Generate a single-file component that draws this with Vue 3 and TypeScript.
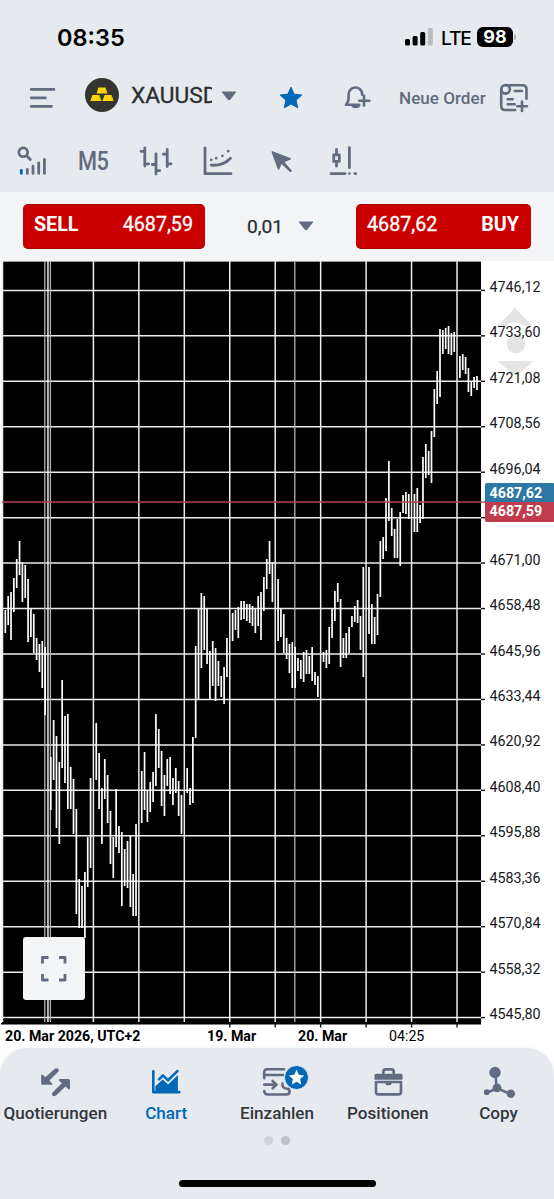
<script setup lang="ts">
type Bar = [index: number, high: number, low: number]

const left = 2.5
const step = 2.841
const top = 261
const gridTop = 290.4
const gridGap = 45.45

const bars: Bar[] = [
  [1, 610, 633], [2, 596, 625], [3, 592, 640], [4, 578, 612], [5, 559, 588], [6, 541, 575],
  [7, 562, 602], [8, 565, 598], [9, 579, 642], [10, 609, 637], [11, 614, 653], [12, 638, 660],
  [13, 644, 672], [14, 641, 688], [15, 647, 715], [17, 757, 810], [18, 720, 780], [19, 736, 828],
  [20, 762, 844], [21, 680, 768], [22, 716, 783], [23, 714, 809], [24, 767, 809], [25, 779, 834],
  [26, 809, 914], [27, 879, 928], [28, 886, 928], [29, 872, 938], [30, 837, 887], [31, 778, 868],
  [33, 723, 780], [34, 753, 809], [35, 788, 844], [36, 759, 799], [37, 775, 823], [38, 811, 864],
  [39, 837, 878], [40, 789, 847], [41, 826, 853], [42, 832, 906], [43, 849, 886], [44, 841, 888],
  [45, 835, 907], [46, 874, 916], [47, 824, 916], [49, 771, 823], [50, 752, 810], [51, 790, 822],
  [52, 782, 812], [53, 772, 802], [54, 714, 786], [55, 729, 768], [56, 751, 806], [57, 775, 816],
  [58, 759, 786], [59, 757, 794], [60, 778, 805], [61, 768, 793], [62, 781, 816], [63, 795, 834],
  [65, 768, 793], [66, 788, 805], [67, 737, 803], [68, 646, 738], [69, 609, 699], [70, 593, 668],
  [71, 596, 650], [72, 609, 664], [73, 651, 700], [74, 641, 686], [75, 648, 701], [76, 661, 686],
  [77, 676, 697], [78, 667, 704], [79, 638, 677], [81, 613, 641], [82, 610, 630], [83, 607, 638],
  [84, 601, 620], [85, 601, 619], [86, 604, 621], [87, 604, 623], [88, 606, 626], [89, 609, 633],
  [90, 596, 626], [91, 592, 640], [92, 577, 611], [93, 559, 589], [94, 541, 574], [95, 562, 602],
  [97, 579, 641], [98, 609, 637], [99, 614, 653], [100, 638, 659], [101, 644, 673], [102, 642, 688],
  [103, 647, 688], [104, 658, 671], [105, 660, 679], [106, 652, 682], [107, 650, 674], [108, 656, 674],
  [109, 647, 681], [110, 672, 685], [111, 676, 697], [113, 652, 662], [114, 650, 668], [115, 627, 664],
  [116, 609, 638], [117, 591, 621], [118, 583, 602], [119, 599, 667], [120, 638, 658], [121, 633, 658],
  [122, 627, 653], [123, 616, 627], [124, 606, 622], [125, 600, 623], [126, 616, 650], [127, 567, 677],
  [129, 567, 634], [130, 604, 644], [131, 617, 644], [132, 594, 635], [133, 541, 597], [134, 537, 559],
  [135, 498, 551], [136, 461, 521], [137, 508, 536], [138, 529, 558], [139, 519, 558], [140, 512, 566],
  [141, 495, 513], [142, 492, 514], [143, 494, 519], [145, 494, 532], [146, 488, 532], [147, 505, 523],
  [148, 457, 519], [149, 444, 478], [150, 451, 475], [151, 431, 483], [152, 389, 437], [153, 371, 404],
  [154, 329, 397], [155, 330, 354], [156, 328, 349], [157, 326, 354], [158, 333, 355], [159, 332, 352],
  [161, 356, 378], [162, 354, 370], [163, 357, 374], [164, 368, 392], [165, 382, 396], [166, 377, 388],
  [167, 376, 390],
]

const rows = Array.from({ length: 17 }, (_, k) => gridTop + gridGap * k - top)
const columns = Array.from({ length: 11 }, (_, k) => left + gridGap * k)
const sessionLines = [44.8, 50.4, 294.8]
const barX = (i: number) => left + step * i
const prices = [
  '4746,12', '4733,60', '4721,08', '4708,56', '4696,04', '', '4671,00', '4658,48', '4645,96',
  '4633,44', '4620,92', '4608,40', '4595,88', '4583,36', '4570,84', '4558,32', '4545,80',
]
const starPath = 'M12 1.2l3.2 7 7.6.8-5.7 5.2 1.6 7.6-6.7-3.8-6.7 3.8 1.6-7.6L1.2 9l7.6-.8z'
</script>

<template>
  <main class="screen">
    <header class="head">
      <div class="status">
        <span class="clock">08:35</span>
        <svg class="signal" width="28" height="18" viewBox="0 0 28 18">
          <rect x="0" y="11" width="5" height="6.5" rx="1.5" />
          <rect x="7.6" y="8" width="5" height="9.5" rx="1.5" />
          <rect x="15.2" y="4" width="5" height="13.5" rx="1.5" />
          <rect x="22.8" y="0" width="5" height="17.5" rx="1.5" fill="#b9bcc1" />
        </svg>
        <span class="lte">LTE</span>
        <span class="battery">98</span><i class="nub"></i>
      </div>

      <div class="title-row">
        <svg class="menu" width="26" height="22" viewBox="0 0 26 22">
          <path class="line" d="M2.2 2.4H25M2.2 10.9H16.5M2.2 19.4H22.5" />
        </svg>
        <svg class="gold" width="34" height="34" viewBox="0 0 34 34">
          <circle cx="17" cy="17" r="17" fill="#35352f" />
          <path fill="#ffd60a" d="M13.4 9.6h7l2.1 6H11.6zM7.4 16.9h6.8l2.5 6.2H5.3zM19.6 16.9h6.8l2.3 6.2H17.4z" />
          <path fill="#dcb400" d="M13.2 16.9h1l2.5 6.2h-1.3zM25.4 16.9h1l2.3 6.2h-1.3zM19.5 9.6h.9l2.1 6h-1.3z" />
        </svg>
        <span class="symbol">XAUUSD</span>
        <svg class="caret" width="16" height="10" viewBox="0 0 16 10"><path d="M1.4 1h13.2L9 8q-1 1-2 0z" /></svg>
        <svg class="favourite" width="24" height="24" viewBox="0 0 24 24"><path :d="starPath" /></svg>
        <svg class="bell" width="28" height="24" viewBox="0 0 28 24">
          <path class="line" d="M15.2 18.8H2c1.6-1.8 2.6-3.2 2.6-6V8.5a6.8 6.8 0 0 1 13.6-.5v.7M20 9.8v9.8M15.2 14.7h10.2" />
          <path fill="#626b80" d="M7 19.5h9.5a5 4 0 0 1-9.5 0z" />
        </svg>
        <span class="neue">Neue Order</span>
        <svg class="order" width="30" height="30" viewBox="0 0 30 30">
          <path class="line" d="M6 2.2h17.5q4 0 4 4v9.5M2.2 6v17q0 4 4 4h10M8.7 16.2h5M8.7 21.2h7M15.8 8h7M23 18.5v9.5M18.2 23.2h9.8" />
          <circle class="line" cx="6.6" cy="6.3" r="4.3" />
        </svg>
      </div>

      <div class="tools">
        <svg class="tool t1" width="30" height="30" viewBox="0 0 30 30">
          <circle class="line" cx="6.2" cy="6.3" r="4.4" /><path class="line" d="M9.7 9.7l3.6 3.8" />
          <path class="line" d="M10.3 23.4v4M16 20.2v7.2M21.7 16.8v10.6M27.4 13.3v14.1" />
          <path class="line blue" d="M4.3 24.3v3.1" />
        </svg>
        <span class="period">M5</span>
        <svg class="tool t2" width="32" height="30" viewBox="0 0 32 30">
          <path class="line" d="M4.8 1.8V20M1 5.3h3.8M4.8 17.8h3.8M16 7.8V28M12.2 18.5H16M16 24.6h3.8M27.2 3.5v17M23.4 8.2h3.8M27.2 17.8H31" />
        </svg>
        <svg class="tool t3" width="30" height="30" viewBox="0 0 30 30">
          <path class="line" d="M2 2v25.7h26M8.2 19.2q12 .8 19.3-7" />
          <path class="line dots" d="M8.2 13.8h.01M13.2 12.2h.01M19.4 9.8h.01M25.2 5.2h.01" />
        </svg>
        <svg class="tool t4" width="24" height="24" viewBox="0 0 24 24">
          <path fill="#626b80" d="M1.6 1.2Q.2.8.7 2.5L6.7 19q.8 1.6 1.6.2l2.2-5.1 8.2 7.7q1.8.9 2.2-1L13.4 12l6-2.3q1.4-.9-.2-1.6z" />
        </svg>
        <svg class="tool t5" width="30" height="30" viewBox="0 0 30 30">
          <path class="line" d="M7.5 3.3V8M7.5 16v4.2M4.7 8.8h5.6v6.6H4.7zM20.4 1.7v20M2 27.6h14" />
          <path class="line dots" d="M20.4 27.6h.01M25.8 27.6h1" />
        </svg>
      </div>
    </header>

    <section class="trade">
      <button class="deal sell"><b>SELL</b><span>4687,59</span></button>
      <div class="volume">
        <span>0,01</span>
        <svg class="caret" width="16" height="10" viewBox="0 0 16 10"><path d="M1.4 1h13.2L9 8q-1 1-2 0z" /></svg>
      </div>
      <button class="deal buy"><span>4687,62</span><b>BUY</b></button>
    </section>

    <section class="chart">
      <svg class="plot" width="485" height="768" viewBox="0 0 485 768">
        <rect x="2" y="0" width="479" height="763" fill="#000" />
        <path d="M2 .5H481" stroke="#999" />
        <g stroke="#ececec" stroke-width="1.5">
          <line v-for="y in rows" :key="y" x1="2" x2="481" :y1="y" :y2="y" />
          <line v-for="x in columns" :key="x" :x1="x" :x2="x" y1="0" y2="761" />
        </g>
        <line v-for="x in sessionLines" :key="x" :x1="x" :x2="x" y1="0" y2="761" stroke="#b4b4b4" stroke-width="1.3" />
        <line
          v-for="[i, high, low] in bars" :key="i" class="bar"
          :x1="barX(i)" :x2="barX(i)" :y1="high - top" :y2="low - top"
        />
        <path d="M2 241H485" stroke="#b5474d" stroke-width="1.7" />
        <path d="M1 762.7H481" stroke="#000" stroke-width="1.4" />
        <line v-for="y in rows" :key="'t' + y" x1="481" x2="485" :y1="y" :y2="y" stroke="#111" stroke-width="1.4" />
        <line v-for="x in columns.slice(5)" :key="'b' + x" :x1="x" :x2="x" y1="762" y2="766.5" stroke="#111" stroke-width="1.4" />
      </svg>
      <div class="axis">
        <svg class="shift" width="38" height="68" viewBox="0 0 38 68">
          <path fill="#e4e4e4" d="M19 0l18 18.5H28a11.5 11.5 0 0 0-18 0H1zM1.5 53H38L24.5 64q-5 4-10 0z" />
          <circle cx="20" cy="36" r="9.3" fill="#e4e4e4" />
        </svg>
        <span v-for="(price, i) in prices" :key="i" class="price">{{ price }}</span>
        <div class="quotes"><b class="ask">4687,62</b><b class="bid">4687,59</b></div>
      </div>
      <button class="expand">
        <svg width="28" height="28" viewBox="0 0 28 28">
          <path class="frame" d="M2.5 8.5v-6h6M19 2.5h6v6M25 19v6h-6M8.5 25h-6v-6" />
        </svg>
      </button>
    </section>

    <div class="dates">
      <b class="d1">20. Mar 2026, UTC+2</b><b class="d2">19. Mar</b><b class="d3">20. Mar</b><span class="d4">04:25</span>
    </div>

    <footer class="foot">
      <nav class="tabs">
        <a class="tab">
          <svg width="32" height="32" viewBox="0 0 32 32">
            <path fill="#626b80" d="M2.2 9.6q0-2 1.8-.6l2.4 2.2 9.4-8.4q2.8-1.6 3.9.6.6 1.5-.7 2.6l-8.6 8.5 2.8 2.9q1 1.3-.8 1.4H3.7q-1.5 0-1.5-1.5z" />
            <path fill="#626b80" d="M31 22.3q0 2-1.8.6L26.6 20.5 17 29.5q-2.6 1.5-3.9-.6-.6-1.5.7-2.7l9-8.9-2.8-2.7q-1-1.5.9-1.6h8.7q1.4 0 1.4 1.5z" />
          </svg>
          <span>Quotierungen</span>
        </a>
        <a class="tab active">
          <svg width="32" height="32" viewBox="0 0 32 32">
            <path class="line blue" d="M3.3 5.3v20.8h26M9 13.3l4-4 5 5 9.4-9.2" />
            <path fill="#0068b7" d="M5.4 25v-4.8l7.3-6.7 5.4 5 9.8-9.4V25z" />
          </svg>
          <span>Chart</span>
        </a>
        <a class="tab">
          <svg width="32" height="32" viewBox="0 0 32 32">
            <path class="line" d="M23 3.2H6.2Q3.2 3.2 3.2 6.5v5.7M3.2 9H22M3.2 18.6h12M11.6 15l4 3.6-4 3.7M3.2 25q.3 3.5 3.5 3.5h18.5q3.3 0 3.3-3t-3.3-3q-4.2-.6-3.7-5" />
          </svg>
          <span class="badge"><svg width="17" height="17" viewBox="0 0 24 24"><path :d="starPath" fill="#fff" /></svg></span>
          <span>Einzahlen</span>
        </a>
        <a class="tab">
          <svg width="32" height="32" viewBox="0 0 32 32">
            <path class="line" d="M11.3 8V5.7q0-2.3 2.3-2.3h5.8q2.3 0 2.3 2.3V8M4 16v10q0 2.4 2.4 2.4h20.2q2.4 0 2.4-2.4V16z" />
            <path fill="#626b80" d="M4.2 7.8h24.6q1.7 0 1.7 1.7v4.2H2.5V9.5q0-1.7 1.7-1.7zM13.5 16h6v1.6q0 1.7-1.7 1.7h-2.6q-1.7 0-1.7-1.7z" />
          </svg>
          <span>Positionen</span>
        </a>
        <a class="tab">
          <svg width="32" height="32" viewBox="0 0 32 32">
            <path class="line" d="M12.4 7l1.2 15M3.5 27l10.6-4.8 13.5 6" />
            <g fill="#626b80"><circle cx="12" cy="6.5" r="5.7" /><circle cx="14" cy="21.9" r="4.4" /><circle cx="3.7" cy="26.2" r="2.9" /><circle cx="27.8" cy="27.7" r="4.2" /></g>
          </svg>
          <span>Copy</span>
        </a>
      </nav>
      <div class="pages"><i></i><i class="on"></i></div>
      <div class="home"></div>
    </footer>
  </main>
</template>

<style>
body { margin: 0; background: #fff; }
</style>

<style scoped>
* { box-sizing: border-box; }
.screen { width: 554px; height: 1199px; overflow: hidden; display: flex; flex-direction: column; background: #fff; font-family: Roboto, "Liberation Sans", sans-serif; color: #1b1e22; }
svg { display: block; flex: none; overflow: visible; }
button { border: 0; font: inherit; }
.line { fill: none; stroke: #626b80; stroke-width: 2.6; stroke-linecap: round; stroke-linejoin: round; }
.tools .line { stroke-width: 2.8; }
.blue { stroke: #0068b7; }
.caret { fill: #626b80; stroke: #626b80; stroke-width: 1.2; stroke-linejoin: round; }
.head { height: 192px; flex: none; background: #e6eaef; }
.status { height: 74px; display: flex; align-items: center; padding-left: 57px; color: #000; font-family: Inter, sans-serif; }
.clock { width: 348px; font-size: 23.5px; font-weight: 600; line-height: 30px; padding-top: 1px; }
.lte { margin-left: 8px; width: 36px; font-size: 19.2px; font-weight: 500; letter-spacing: -1.1px; padding-top: 1px; }
.battery { width: 36px; height: 20px; background: #000; color: #fff; border-radius: 6px; text-align: center; font-size: 18px; line-height: 20px; font-weight: 700; }
.nub { width: 2px; height: 6px; margin-left: 1px; background: #aeb1b6; border-radius: 0 2px 2px 0; }
.title-row { height: 48px; display: flex; align-items: center; padding-left: 29px; }
.gold { margin: -6px 0 0 30px; }
.symbol { margin: -5px 0 0 12px; width: 81px; overflow: hidden; font-size: 22.7px; line-height: 30px; color: #2c2e31; -webkit-text-stroke: .3px #2c2e31; }
.title-row .caret { margin: -5px 0 0 9px; }
.favourite { margin-left: 42px; fill: #0068b7; stroke: #0068b7; stroke-width: 1; stroke-linejoin: round; }
.bell { margin-left: 41px; }
.neue { margin-left: 27px; width: 100px; font-size: 17.1px; font-weight: 500; color: #626b80; white-space: nowrap; }
.tools { height: 70px; display: flex; align-items: flex-start; padding: 24px 0 0 17px; }
.period { margin: 1px 0 0 31px; width: 32px; font-size: 25px; line-height: 30px; font-weight: 500; letter-spacing: -.5px; color: #626b80; transform: scaleX(.87); transform-origin: left; }
.t2 { margin-left: 30px; }
.t3 { margin-left: 31px; }
.t4 { margin: 4px 0 0 38px; }
.t5 { margin-left: 34px; }
.trade { height: 69px; flex: none; display: flex; align-items: flex-start; padding: 12px 23px 0; background: #f2f4f6; }
.deal { display: flex; justify-content: space-between; height: 45px; padding: 8px 12px 0 11px; border-radius: 5px; background: #ca0000; color: #fff; font-size: 19.7px; line-height: 24px; border-bottom: 1px solid #a40000; border-top: 1px solid #a40000; }
.deal span { font-weight: 400; -webkit-text-stroke: .3px #fff; }
.deal b { font-weight: 700; }
.sell { width: 182px; }
.buy { width: 175px; }
.volume { width: 151px; display: flex; align-items: center; padding-left: 42px; height: 44px; font-size: 19.2px; gap: 15px; color: #292c30; -webkit-text-stroke: .25px #292c30; }
.volume .caret { margin-top: -1px; }
.chart { position: relative; height: 768px; flex: none; display: flex; margin-bottom: -7px; }
.bar { stroke: #fff; stroke-width: 1.7; }
.axis { position: relative; width: 69px; padding-top: 3px; }
.price { display: block; position: relative; height: 45.45px; padding-left: 4.5px; line-height: 46px; font-size: 14.3px; color: #17191b; }
.shift { position: absolute; left: 11px; top: 47px; }
.quotes { position: absolute; left: 0; top: 222px; width: 70px; display: flex; flex-direction: column; border-radius: 2px; overflow: hidden; color: #fff; font-size: 14.3px; }
.quotes b { height: 19px; line-height: 21px; padding-left: 4.5px; font-weight: 700; }
.ask { background: #2c77a4; }
.quotes .bid { height: 20px; line-height: 19px; background: #c03b4b; }
.expand { position: absolute; left: 23px; top: 676px; width: 62px; height: 63px; padding: 0; display: grid; place-items: center; background: #f3f4f6; border-radius: 3px; }
.frame { fill: none; stroke: #626b80; stroke-width: 2.8; stroke-linejoin: round; }
.dates { height: 26px; flex: none; display: flex; padding: 6px 0 0 5px; font-size: 14.2px; line-height: 17px; white-space: nowrap; color: #000; }
.d1 { width: 202px; }
.d2 { width: 91px; }
.d3 { width: 91px; }
.foot { height: 151px; flex: none; background: #e6eaef; border-radius: 27px 27px 0 0; box-shadow: 0 0 4px #f0f2f4; }
.tabs { display: grid; grid-template-columns: repeat(5, 110.8px); height: 78px; padding-top: 18px; }
.tab { position: relative; display: flex; flex-direction: column; align-items: center; font-size: 17.1px; font-weight: 500; line-height: 20px; color: #34373c; gap: 4.5px; }
.tab.active { color: #0068b7; }
.badge { position: absolute; left: 62.5px; top: -1.5px; width: 25px; height: 25px; border-radius: 50%; border: 1px solid #e6eaef; background: #0068b7; display: grid; place-items: center; }
.pages { height: 28px; display: flex; justify-content: center; align-items: center; gap: 8px; }
.pages i { width: 9px; height: 9px; border-radius: 50%; background: #cfd2d7; }
.pages .on { background: #bcc0c9; }
.home { width: 197px; height: 7px; margin: 26px auto 0 179px; border-radius: 4px; background: #000; }
</style>
